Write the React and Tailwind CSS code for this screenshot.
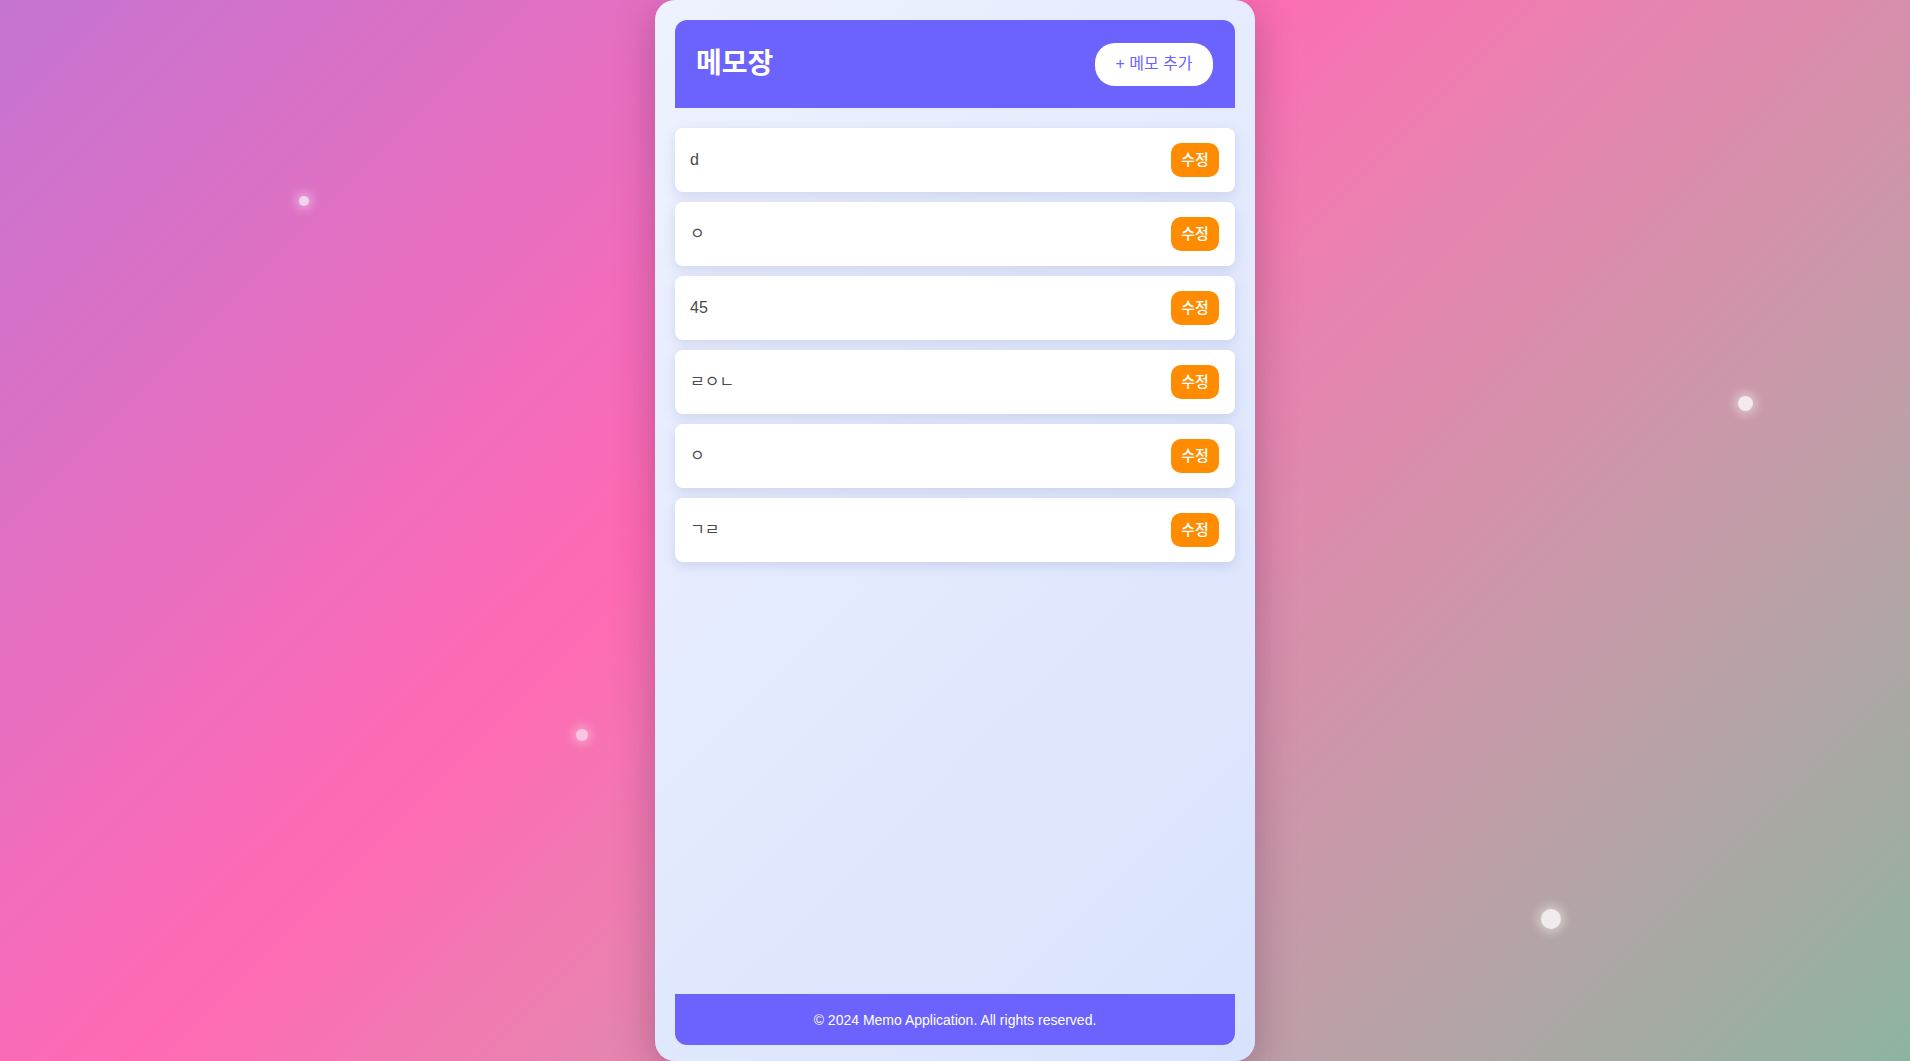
import { useState } from 'react';

const initialMemos = [
  { id: 1, text: 'd' },
  { id: 2, text: 'ㅇ' },
  { id: 3, text: '45' },
  { id: 4, text: 'ㄹㅇㄴ' },
  { id: 5, text: 'ㅇ' },
  { id: 6, text: 'ㄱㄹ' },
];

// decorative glowing dots on the background
const dots = [
  { left: 299, top: 196, size: 10, cls: 'opacity-70' },
  { left: 1738, top: 396, size: 15, cls: 'opacity-80' },
  { left: 1541, top: 909, size: 20, cls: 'opacity-80' },
  { left: 576, top: 729, size: 12, cls: 'opacity-60' },
];

export default function App() {
  const [memos] = useState(initialMemos);

  return (
    <div
      className="relative h-screen w-full overflow-hidden bg-linear-135 from-[#c473d0] via-[#ff69b4] via-40% to-[#8cb4a0]"
      style={{ fontFamily: '"Liberation Sans", "Noto Sans CJK KR", sans-serif' }}
    >
      {dots.map((d, i) => (
        <span
          key={i}
          className={`absolute rounded-full bg-white shadow-[0_0_10px_4px_rgba(255,255,255,0.5)] ${d.cls}`}
          style={{ left: d.left, top: d.top, width: d.size, height: d.size }}
        />
      ))}

      <div className="relative mx-auto flex h-screen w-[600px] flex-col rounded-[20px] bg-linear-135 from-[#eef2fe] to-[#d8e2fd] px-5 pt-5 pb-4 shadow-[0_10px_40px_rgba(60,20,60,0.3)]">
        {/* Header */}
        <header className="flex h-[88px] shrink-0 items-center justify-between rounded-t-xl bg-[#6c63ff] pl-[21px] pr-[22px]">
          <h1 className="text-[28px] font-bold text-white">메모장</h1>
          <button className="h-[43px] w-[118px] rounded-[20px] bg-white text-base text-[#6c63ff]">
            + 메모 추가
          </button>
        </header>

        {/* Memo list */}
        <div className="mt-5 flex flex-1 flex-col gap-[10px]">
          {memos.map((memo) => (
            <div
              key={memo.id}
              className="flex h-16 items-center justify-between rounded-lg bg-white pl-[15px] pr-4 shadow-[0_4px_12px_rgba(90,100,160,0.18)]"
            >
              <span className="text-base text-[#4a4a4a]">{memo.text}</span>
              <button className="h-[34px] w-[48px] rounded-[10px] bg-[#ff8c00] text-[15px] font-medium text-white">
                수정
              </button>
            </div>
          ))}
        </div>

        {/* Footer */}
        <footer className="flex h-[51px] shrink-0 items-center justify-center rounded-b-xl bg-[#6c63ff] text-sm text-white">
          © 2024 Memo Application. All rights reserved.
        </footer>
      </div>
    </div>
  );
}
